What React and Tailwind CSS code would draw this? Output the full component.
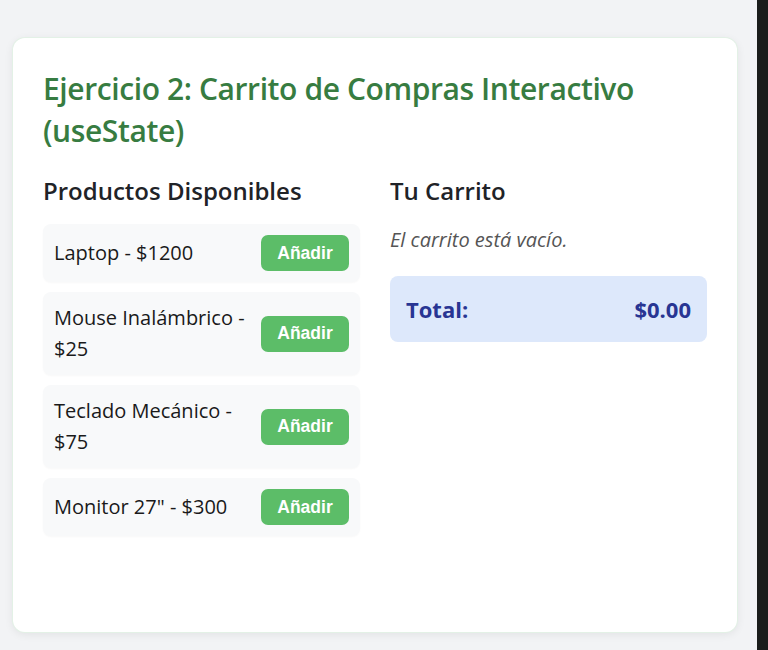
import React from "react";

const products = [
  { name: "Laptop", price: 1200 },
  { name: "Mouse Inalámbrico", price: 25 },
  { name: "Teclado Mecánico", price: 75 },
  { name: 'Monitor 27"', price: 300 },
];

export default function App() {
  return (
    <div className="flex h-[650px] w-[768px] bg-[#f2f3f5] overflow-hidden" style={{ fontFamily: '"Open Sans", sans-serif' }}>
      <div className="flex-1">
        <div className="ml-[13px] mt-[38px] h-[594px] w-[724px] rounded-[12px] bg-white p-[30px] shadow-[0_0_0_1px_#e3f1e6,0_2px_10px_rgba(0,0,0,0.08)]">
          <h2 className="text-[30px] leading-[42px] font-semibold text-[#377c41] tracking-[-0.4px]">
            Ejercicio 2: Carrito de Compras Interactivo (useState)
          </h2>
          <div className="mt-[22px] grid grid-cols-2 gap-[30px]">
            <div>
              <h3 className="text-[24px] leading-[34px] font-semibold text-[#1f2328]">Productos Disponibles</h3>
              <div className="mt-[16px] flex flex-col gap-[10px]">
                {products.map((p) => (
                  <div key={p.name} className="flex items-center justify-between gap-[10px] rounded-[8px] bg-[#f8f9fa] px-[11px] py-[11px] shadow-[0_1px_2px_rgba(0,0,0,0.03)]">
                    <span className="text-[20px] leading-[30.5px] text-[#1a1a1a] max-w-[195px]">
                      {p.name} - ${p.price}
                    </span>
                    <button className="h-[36px] w-[88px] shrink-0 rounded-[7px] bg-[#5cbd68] text-[17.5px] font-bold text-white" style={{ fontFamily: '"Liberation Sans", Arial, sans-serif' }}>
                      Añadir
                    </button>
                  </div>
                ))}
              </div>
            </div>
            <div>
              <h3 className="text-[24px] leading-[34px] font-semibold text-[#1f2328]">Tu Carrito</h3>
              <p className="mt-[17px] text-[20px] leading-[30px] italic text-[#555]">El carrito está vacío.</p>
              <div className="mt-[21px] flex items-center justify-between rounded-[8px] bg-[#dde8fb] px-[16px] py-[16px]">
                <span className="text-[22px] leading-[34px] font-bold text-[#283593]">Total:</span>
                <span className="text-[22px] leading-[34px] font-bold text-[#283593]">$0.00</span>
              </div>
            </div>
          </div>
        </div>
      </div>
      <div className="w-[11px] bg-[#1b1d1b]" />
    </div>
  );
}
